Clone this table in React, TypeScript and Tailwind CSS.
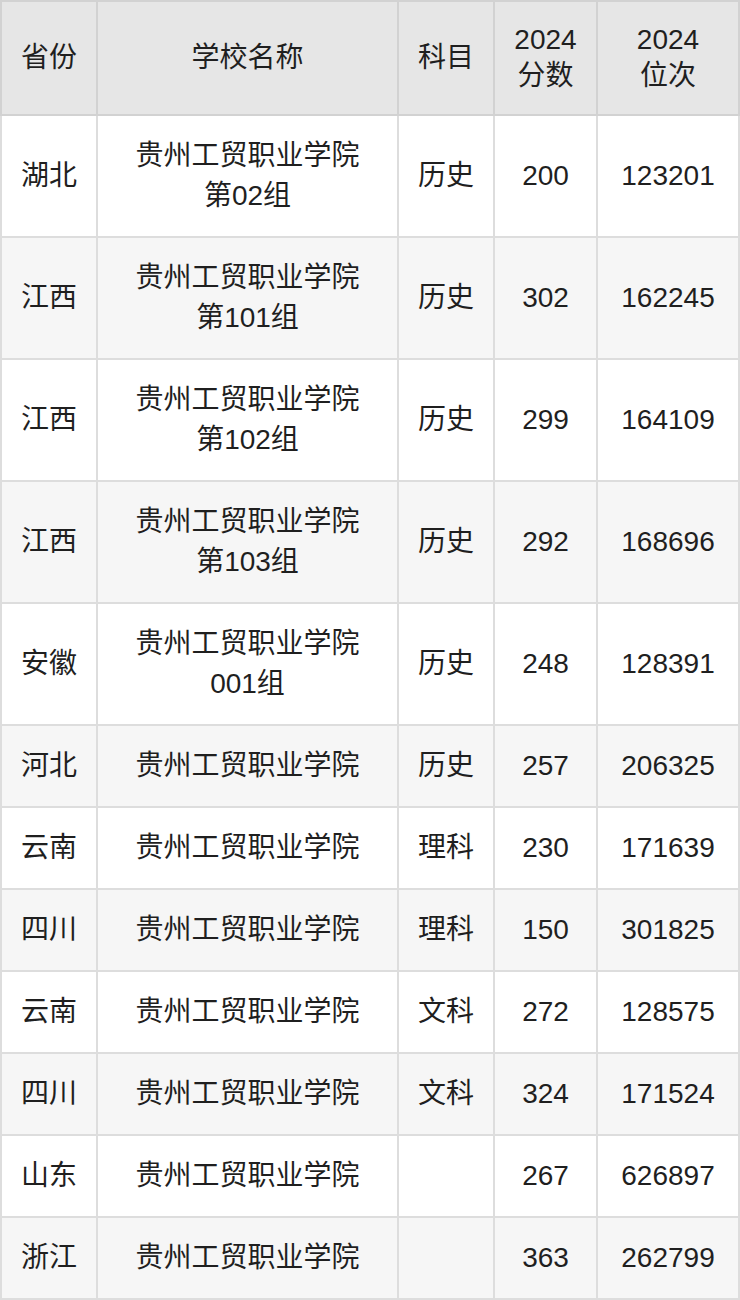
import React from "react";

const rows: [string, string[], string, string, string][] = [
  ["湖北", ["贵州工贸职业学院", "第02组"], "历史", "200", "123201"],
  ["江西", ["贵州工贸职业学院", "第101组"], "历史", "302", "162245"],
  ["江西", ["贵州工贸职业学院", "第102组"], "历史", "299", "164109"],
  ["江西", ["贵州工贸职业学院", "第103组"], "历史", "292", "168696"],
  ["安徽", ["贵州工贸职业学院", "001组"], "历史", "248", "128391"],
  ["河北", ["贵州工贸职业学院"], "历史", "257", "206325"],
  ["云南", ["贵州工贸职业学院"], "理科", "230", "171639"],
  ["四川", ["贵州工贸职业学院"], "理科", "150", "301825"],
  ["云南", ["贵州工贸职业学院"], "文科", "272", "128575"],
  ["四川", ["贵州工贸职业学院"], "文科", "324", "171524"],
  ["山东", ["贵州工贸职业学院"], "", "267", "626897"],
  ["浙江", ["贵州工贸职业学院"], "", "363", "262799"],
];

export default function App() {
  const font = { fontFamily: '"Liberation Sans", "Noto Sans CJK SC", sans-serif' };
  return (
    <div className="w-[740px] bg-white" style={font}>
      <div className="grid grid-cols-[94px_299px_94px_101px_140px] gap-[2px] p-[2px] bg-[#d2d2d2] text-[28px] text-[#1f1f1f]">
        {[["省份"], ["学校名称"], ["科目"], ["2024", "分数"], ["2024", "位次"]].map((h, i) => (
          <div key={i} className="bg-[#e6e6e6] h-[112px] flex flex-col items-center justify-center text-center leading-[36px]">
            {h.map((t, j) => (
              <div key={j}>{t}</div>
            ))}
          </div>
        ))}
      </div>
      <div className="grid grid-cols-[94px_299px_94px_101px_140px] gap-[2px] px-[2px] pb-[2px] bg-[#dddddd] text-[28px] text-[#1f1f1f]">
        {rows.map((r, i) => {
          const bg = i % 2 === 0 ? "bg-white" : "bg-[#f6f6f6]";
          const cells: string[][] = [[r[0]], r[1], [r[2]], [r[3]], [r[4]]];
          return cells.map((c, j) => (
            <div key={i + "-" + j} className={`${bg} py-[20px] flex flex-col items-center justify-center text-center leading-[40px]`}>
              {c.map((t, k) => (
                <div key={k}>{t || "\u00a0"}</div>
              ))}
            </div>
          ));
        })}
      </div>
    </div>
  );
}
